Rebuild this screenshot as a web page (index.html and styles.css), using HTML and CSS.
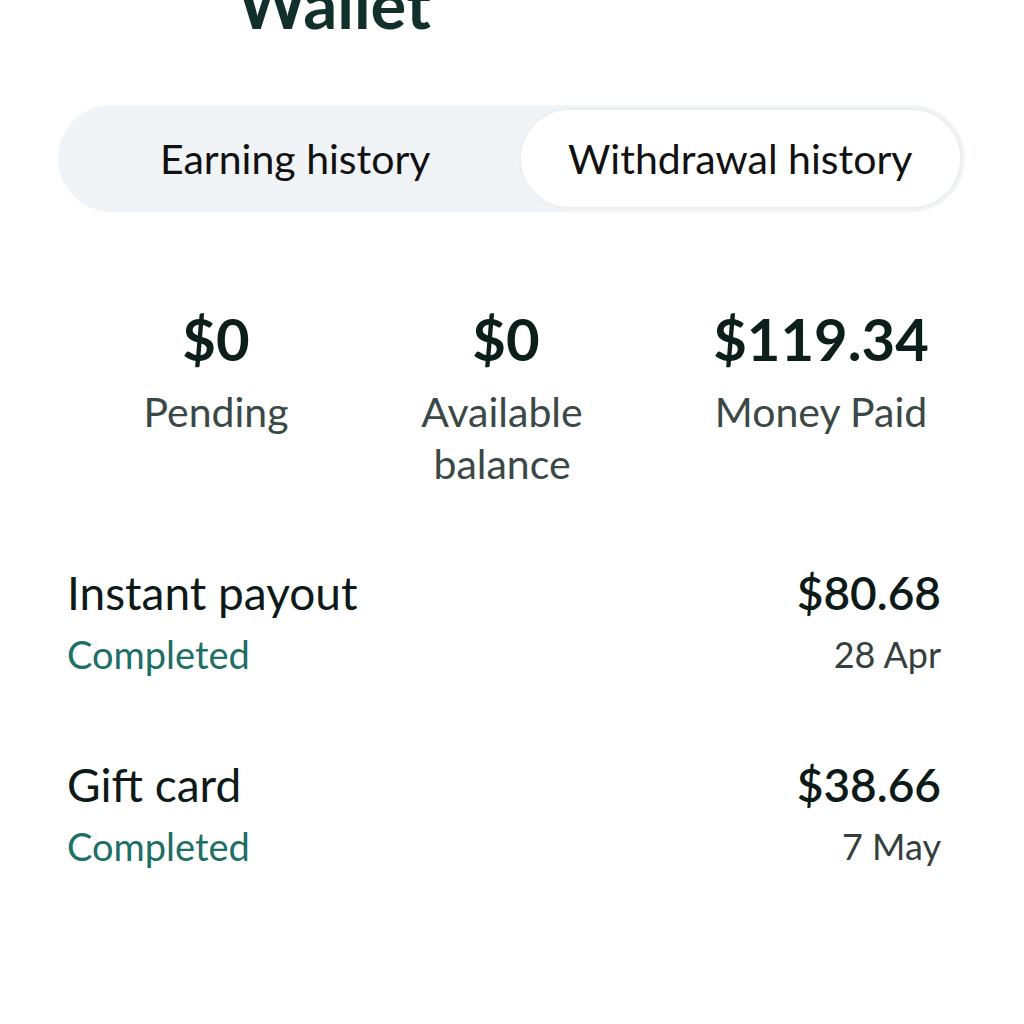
FILE: index.html
```html
<!DOCTYPE html>
<html lang="en">
<head>
    <meta charset="UTF-8">
    <meta name="viewport" content="width=device-width, initial-scale=1.0">
    <title>Wallet</title>
    <link rel="stylesheet" href="styles.css">
</head>
<body>
    <!-- Header -->
    <h1 class="page-title">Wallet</h1>

    <!-- Tabs -->
    <div class="tabs">
        <a class="tab" href="#earning">Earning history</a>
        <a class="tab tab-active" href="#withdrawal">Withdrawal history</a>
    </div>

    <!-- Summary -->
    <div class="stats">
        <div class="stat stat-pending">
            <div class="stat-value">$0</div>
            <div class="stat-label">Pending</div>
        </div>
        <div class="stat stat-available">
            <div class="stat-value">$0</div>
            <div class="stat-label">Available<br>balance</div>
        </div>
        <div class="stat stat-paid">
            <div class="stat-value">$119.34</div>
            <div class="stat-label">Money Paid</div>
        </div>
    </div>

    <!-- Withdrawals -->
    <div class="history">
        <div class="history-row">
            <div class="row-left">
                <div class="row-title">Instant payout</div>
                <div class="row-status">Completed</div>
            </div>
            <div class="row-right">
                <div class="row-amount">$80.68</div>
                <div class="row-date">28 Apr</div>
            </div>
        </div>
        <div class="history-row">
            <div class="row-left">
                <div class="row-title">Gift card</div>
                <div class="row-status">Completed</div>
            </div>
            <div class="row-right">
                <div class="row-amount">$38.66</div>
                <div class="row-date">7 May</div>
            </div>
        </div>
    </div>
</body>
</html>
```

FILE: styles.css
```css
/* ====== Base ====== */
* {
    box-sizing: border-box;
    margin: 0;
    padding: 0;
}

body {
    font-family: Lato, "Open Sans", sans-serif;
    color: #0f1f1c;
    background-color: #fff;
    width: 1024px;
    height: 1024px;
    overflow: hidden;
}

/* ====== Header ====== */
.page-title {
    font-size: 67px;
    font-weight: 700;
    line-height: 64px;
    color: #12302b;
    margin-top: -29px;
    padding-left: 237px;
}

/* ====== Tabs ====== */
.tabs {
    display: grid;
    grid-template-columns: 1fr 1fr;
    margin: 70px 59px 0 58px;
    height: 107px;
    padding: 3px;
    border-radius: 54px;
    background-color: #f1f4f6;
}

.tab {
    display: flex;
    align-items: center;
    justify-content: center;
    font-size: 41px;
    color: #111;
    text-decoration: none;
    border-radius: 51px;
}

.tab:first-child {
    padding-left: 18px;
}

.tab-active {
    background-color: #fff;
    border: 2px solid #eceeef;
    margin-left: 7px;
}

/* ====== Stats ====== */
.stats {
    display: grid;
    grid-template-columns: 290px 290px 340px;
    padding-left: 71px;
    margin-top: 92px;
}

.stat {
    text-align: center;
}

.stat-value {
    font-size: 58px;
    font-weight: 700;
    line-height: 70px;
    color: #0d1f1b;
}

.stat-label {
    font-size: 41px;
    line-height: 52px;
    color: #3a4846;
    margin-top: 12px;
}

.stat-available .stat-label {
    margin-right: 8px;
}

/* ====== History ====== */
.history {
    margin: 73px 83px 0 67px;
    display: flex;
    flex-direction: column;
    gap: 70px;
}

.history-row {
    display: flex;
    justify-content: space-between;
}

.row-right {
    text-align: right;
}

.row-title,
.row-amount {
    font-size: 46px;
    line-height: 60px;
    color: #0d1a18;
}

.row-amount {
    font-weight: 600;
}

.row-status,
.row-date {
    font-size: 38px;
    line-height: 62px;
}

.row-status {
    color: #1e6f66;
}

.row-date {
    font-size: 36px;
    color: #33403e;
}
```
